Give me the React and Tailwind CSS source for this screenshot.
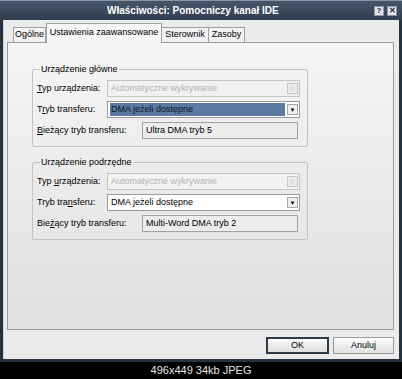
const font = { fontFamily: '"Liberation Sans", Arial, sans-serif' };

function Combo({ text, disabled, selected }) {
    return (
        <div
            className={
                "w-[193px] h-[17px] flex items-center border px-[1px] " +
                (disabled ? "border-[#c4c4c4] bg-[#f1f1f1]" : "border-[#9a9a9a] bg-white")
            }
        >
            <div className="flex-1 h-[13px] flex items-center pl-[1px]">
                <span
                    className={
                        "px-[1px] leading-[13px] " +
                        (disabled
                            ? "text-[#b3b3b3]"
                            : selected
                              ? "w-full bg-[#5b79a2] text-[#0d1624]"
                              : "text-black")
                    }
                >
                    {text}
                </span>
            </div>
            <div
                className={
                    "w-[11px] h-[11px] ml-[2px] flex items-center justify-center border text-[6px] leading-none " +
                    (disabled
                        ? "border-[#c8c8c8] bg-[#ececec] text-[#b8b8b8]"
                        : "border-[#a8a8a8] bg-[#efefef] text-black")
                }
            >
                {disabled ? "▽" : "▼"}
            </div>
        </div>
    );
}

function Row({ label, children, labelW }) {
    return (
        <div className="flex items-center h-[17px]">
            <div className="shrink-0" style={{ width: labelW }}>
                {label}
            </div>
            {children}
        </div>
    );
}

function Group({ title, labels, current }) {
    return (
        <fieldset className="w-[276px] border border-[#c3c3c3] rounded-[2px] px-[4px] pb-[7px]">
            <legend className="ml-[3px] px-[1px] leading-[11px] text-black">{title}</legend>
            <div className="flex flex-col gap-[4px] pt-[5px]">
                <Row label={labels[0]} labelW={70}>
                    <Combo text="Automatyczne wykrywanie" disabled />
                </Row>
                <Row label={labels[1]} labelW={70}>
                    <Combo text="DMA jeżeli dostępne" selected={current === "Ultra DMA tryb 5"} />
                </Row>
                <Row label={labels[2]} labelW={105}>
                    <div className="w-[156px] h-[17px] border border-[#a3a3a3] bg-[#ececec] flex items-center px-[3px] text-black">
                        {current}
                    </div>
                </Row>
            </div>
        </fieldset>
    );
}

export default function App() {
    return (
        <div className="w-[402px] h-[379px] bg-black flex flex-col overflow-hidden text-[9px]" style={font}>
            <div className="h-[362px] flex flex-col bg-[#27323f] border-t border-[#8793a0] px-[3px] pb-[3px]">
                {/* title bar */}
                <div className="h-[19px] flex items-center bg-gradient-to-b from-[#46566a] to-[#303d4d] -mx-[3px] pl-[107px] pr-[5px]">
                    <span className="flex-1 text-white font-bold text-[10px]">
                        Właściwości: Pomocniczy kanał IDE
                    </span>
                    <div className="flex gap-[3px]">
                        <div className="w-[10px] h-[10px] bg-[#dfe4e8] border border-[#8d98a3] flex items-center justify-center text-[8px] font-bold text-[#1e2833] leading-none">
                            ?
                        </div>
                        <div className="w-[10px] h-[10px] bg-[#dfe4e8] border border-[#8d98a3] flex items-center justify-center text-[8px] font-bold text-[#1e2833] leading-none">
                            ✕
                        </div>
                    </div>
                </div>

                {/* body */}
                <div className="flex-1 flex flex-col bg-[#ebebeb] border-l border-[#c9d1d9] pl-[3px] pr-[5px]">
                    {/* tabs */}
                    <div className="h-[22px] flex items-end pl-[6px]">
                        <div className="w-[33px] h-[15px] border border-b-0 border-[#9ba3a9] bg-[#f2f2f2] flex items-center justify-center text-black">
                            Ogólne
                        </div>
                        <div className="relative z-10 w-[116px] h-[20px] -mb-[1px] border border-b-0 border-[#9ba3a9] bg-[#f6f6f6] flex items-center justify-center pb-[2px] text-black">
                            Ustawienia zaawansowane
                        </div>
                        <div className="w-[47px] h-[15px] border border-b-0 border-l-0 border-[#9ba3a9] bg-[#f2f2f2] flex items-center justify-center text-black">
                            Sterownik
                        </div>
                        <div className="w-[36px] h-[15px] border border-b-0 border-l-0 border-[#9ba3a9] bg-[#f2f2f2] flex items-center justify-center text-black">
                            Zasoby
                        </div>
                    </div>

                    {/* panel */}
                    <div className="h-[288px] border border-[#949ea6] bg-gradient-to-b from-[#f5f5f5] to-[#e0e0e0] pl-[24px] pt-[21px] flex flex-col gap-[10px]">
                        <Group
                            title="Urządzenie główne"
                            labels={[
                                <span key="a"><u>T</u>yp urządzenia:</span>,
                                <span key="b">T<u>r</u>yb transferu:</span>,
                                <span key="c"><u>B</u>ieżący tryb transferu:</span>,
                            ]}
                            current="Ultra DMA tryb 5"
                        />
                        <Group
                            title="Urządzenie podrzędne"
                            labels={[
                                <span key="a">Typ <u>u</u>rządzenia:</span>,
                                <span key="b">Tryb tra<u>n</u>sferu:</span>,
                                <span key="c">Bie<u>ż</u>ący tryb transferu:</span>,
                            ]}
                            current="Multi-Word DMA tryb 2"
                        />
                    </div>

                    {/* buttons */}
                    <div className="flex justify-end gap-[4px] pt-[7px]">
                        <button className="w-[63px] h-[17px] border-2 border-[#2f3a47] bg-gradient-to-b from-[#fafafa] to-[#dedede] text-black text-[9px] leading-none">
                            OK
                        </button>
                        <button className="w-[61px] h-[17px] border border-[#9b9b9b] bg-gradient-to-b from-[#fcfcfc] to-[#e0e0e0] text-black text-[9px] leading-none">
                            Anuluj
                        </button>
                    </div>
                </div>
            </div>

            <div className="flex-1 flex items-center justify-center text-[11px] text-[#e6e6e6]">
                496x449 34kb JPEG
            </div>
        </div>
    );
}
